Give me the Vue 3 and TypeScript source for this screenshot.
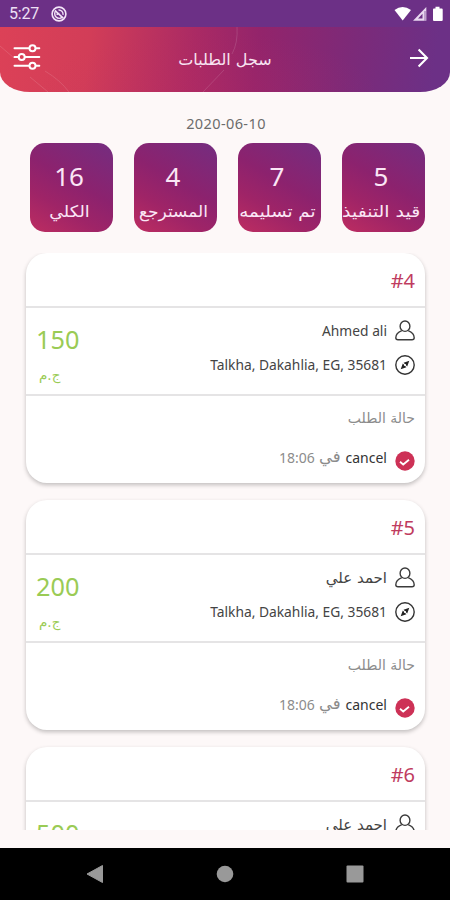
<script setup lang="ts">
interface Stat { value: number; label: string; kind: string }
interface Order { id: number; name: string; arabic: boolean; price: number; address?: string; currency?: string; status?: string; time?: string }

const stats: Stat[] = [
  { value: 5, label: 'قيد التنفيذ', kind: 'pending' },
  { value: 7, label: 'تم تسليمه', kind: 'delivered' },
  { value: 4, label: 'المسترجع', kind: 'returned' },
  { value: 16, label: 'الكلي', kind: 'total' },
]

const address = 'Talkha, Dakahlia, EG, 35681'
const currency = 'ج.م'
const orders: Order[] = [
  { id: 4, name: 'Ahmed ali', arabic: false, price: 150, address, currency, status: 'cancel', time: '18:06' },
  { id: 5, name: 'احمد علي', arabic: true, price: 200, address, currency, status: 'cancel', time: '18:06' },
  { id: 6, name: 'احمد علي', arabic: true, price: 500 },
]
</script>

<template>
  <div class="screen">
    <div class="status">
      <span class="clock">5:27</span>
      <svg class="dnd" width="16" height="16" viewBox="0 0 16 16" fill="none" stroke="#f3e4f8">
        <circle cx="8" cy="8" r="6.9" stroke-width="1.6" />
        <path d="M5 4.6 A4.4 4.4 0 1 0 11.5 11 M7.5 4 A4.2 4.2 0 0 1 12 8.8" stroke-width="1.4" />
        <path d="M4 4.5 L12.2 12.2 M5.5 8.5 L8.5 7.5" stroke-width="1.7" />
      </svg>
      <span class="grow"></span>
      <svg width="50" height="16" viewBox="0 0 50 16">
        <path d="M0.5 4 Q8.5 -2 17 4 L8.7 14.5 Z" fill="#fff" />
        <path d="M19 14.7 L32.3 1 V14.7 Z" fill="#e9d9f1" />
        <path d="M24 12.6 L28.5 7.8 V12.6 Z" fill="#6d3187" />
        <path d="M31 5 V14.7" stroke="#6d3187" stroke-width="0.7" />
        <path d="M39.5 2.5 H41.5 V0.7 H45.5 V2.5 H47.7 Q48.7 2.5 48.7 3.5 V14 Q48.7 15 47.7 15 H40 Q39 15 39 14 V3.5 Z" fill="#fff" />
      </svg>
    </div>

    <header class="header">
      <svg class="header-lines" width="450" height="65" viewBox="0 0 450 65" fill="none" stroke="#fff" stroke-opacity="0.13">
        <path d="M0 19 L14 31 M30 50 L48 65 M45 44 Q60 53 69 65" />
        <path d="M237 0 Q238 16 232 27 M224 43 L203 65" />
      </svg>
      <svg class="filter" width="28" height="28" viewBox="0 0 28 28" fill="none" stroke="#fff" stroke-width="2" stroke-linecap="round">
        <path d="M1.5 5.2 H16 M23 5.2 H26.3 M1.5 14 H5.5 M12 14 H26.3 M1.5 22.8 H16 M23 22.8 H26.3" />
        <circle cx="19.5" cy="5.2" r="3" />
        <circle cx="8.7" cy="14" r="3" />
        <circle cx="19.5" cy="22.8" r="3" />
      </svg>
      <h1 class="title" dir="rtl">سجل الطلبات</h1>
      <svg class="next" width="20" height="20" viewBox="0 0 20 20" fill="none" stroke="#fff" stroke-width="2.1">
        <path d="M1 10 H18 M9.6 1.6 L18 10 L9.6 18.4" />
      </svg>
    </header>

    <div class="date">2020-06-10</div>

    <section class="stats" dir="rtl">
      <div v-for="s in stats" :key="s.kind" class="tile" :class="s.kind">
        <span class="tile-value">{{ s.value }}</span>
        <span class="tile-label">{{ s.label }}</span>
      </div>
    </section>

    <main class="list" dir="rtl">
      <article v-for="o in orders" :key="o.id" class="card">
        <div class="card-head" dir="ltr">#{{ o.id }}</div>
        <div class="card-body">
          <div class="info">
            <div class="row">
              <svg width="20" height="21" viewBox="0 0 20 21" fill="none" stroke="#3b3b3b" stroke-width="1.4" stroke-linejoin="round">
                <ellipse cx="10" cy="6.2" rx="4.9" ry="5.2" />
                <path d="M6.8 10.7 C3.5 12 0.8 14.5 0.8 17.8 Q0.8 19.7 3 19.7 H17 Q19.2 19.7 19.2 17.8 C19.2 14.5 16.5 12 13.2 10.7" />
              </svg>
              <span class="name" :class="{ arabic: o.arabic }">{{ o.name }}</span>
            </div>
            <div v-if="o.address" class="row">
              <svg width="20" height="20" viewBox="0 0 20 20">
                <circle cx="10" cy="10" r="9.2" fill="none" stroke="#333" stroke-width="1.4" />
                <path d="M14.3 5.7 L12.2 11.4 L8.6 7.8 Z M5.7 14.3 L7.8 8.6 L11.4 12.2 Z" fill="#222" />
                <circle cx="10" cy="10" r="1.1" fill="#fff" />
              </svg>
              <span class="address" dir="ltr">{{ o.address }}</span>
            </div>
          </div>
          <div class="price">
            <span class="amount">{{ o.price }}</span>
            <span v-if="o.currency" class="currency">{{ o.currency }}</span>
          </div>
        </div>
        <div v-if="o.status" class="card-foot">
          <div class="foot-title">حالة الطلب</div>
          <div class="state">
            <svg class="check" width="20" height="20" viewBox="0 0 20 20">
              <circle cx="10" cy="10" r="9.7" fill="#cd3156" />
              <path d="M5 10.8 L8.2 13.5 L14 8.8" fill="none" stroke="#fff" stroke-width="1.8" />
            </svg>
            <span class="cancel">{{ o.status }}</span>
            <span class="at">في</span>
            <span class="time">{{ o.time }}</span>
          </div>
        </div>
      </article>
    </main>

    <nav class="nav">
      <svg width="18" height="20" viewBox="0 0 18 20"><path d="M1 10 L16.5 1.5 V18.5 Z" fill="#999" stroke="#999" /></svg>
      <svg width="18" height="20" viewBox="0 0 18 20"><circle cx="9" cy="10" r="8.3" fill="#999" /></svg>
      <svg width="18" height="20" viewBox="0 0 18 20"><rect x="0.5" y="1.5" width="17" height="17" rx="1" fill="#999" /></svg>
    </nav>
  </div>
</template>

<style>
body { margin: 0; background: #fdf8f8; }
</style>

<style scoped>
.screen {
  width: 450px; height: 900px; overflow: hidden;
  display: flex; flex-direction: column;
  background: #fdf8f8;
  font-family: "Noto Sans", "DejaVu Sans", sans-serif;
}
.status {
  height: 27px; flex: none; box-sizing: border-box;
  display: flex; align-items: center; padding: 0 6px 0 9px;
  background: #6c3086;
}
.clock { font: 400 16px/28px Roboto, sans-serif; color: #eee0f5; letter-spacing: -0.2px; width: 42px; padding-top: 1px; }
.grow { flex: 1; }
.header {
  height: 64.5px; flex: none; box-sizing: border-box; position: relative;
  display: flex; align-items: center; justify-content: space-between;
  padding: 0 21px 0 13px; overflow: hidden;
  border-radius: 0 0 30px 30px / 0 0 20px 20px;
  background: radial-gradient(ellipse 175px 68px at 205px 72px, rgba(200,45,95,.2), rgba(200,45,95,0)), linear-gradient(97deg, #dc4157 0%, #d23d58 20%, #aa2a64 43%, #93246b 57%, #7c2a79 78%, #6c3086 96%);
}
.header-lines { position: absolute; left: 0; top: 0; }
.filter { position: relative; margin-bottom: 4px; }
.next { position: relative; margin-bottom: 3px; }
.title { margin: 2px 0 0; position: relative; font: 400 16px/30px "DejaVu Sans", sans-serif; color: #f8e4f2; white-space: nowrap; }
.date { height: 51.5px; flex: none; line-height: 62px; text-align: center; padding-left: 2px; font-size: 14.5px; letter-spacing: .4px; color: #6c6c6c; }
.stats { display: flex; justify-content: space-between; flex: none; padding: 0 25px 0 30px; height: 110px; box-sizing: border-box; }
.tile {
  width: 83px; height: 89px; border-radius: 15px;
  display: flex; flex-direction: column; align-items: center;
  background: linear-gradient(30deg, #bd2d61 0%, #9f2467 30%, #8c226e 55%, #742d80 100%);
  color: #fbe6f6; overflow: hidden;
}
.tile-value { font-size: 26px; line-height: 34px; margin: 16px 5px 0 0; }
.tile-label { font: 400 16px/26px "DejaVu Sans", sans-serif; white-space: nowrap; margin: 6px 4px 0 0; }
.pending .tile-label { transform: scaleX(1.18); }
.delivered .tile-label { transform: scaleX(1.14); }
.returned .tile-label { transform: scaleX(1.06); }
.total .tile-label { transform: scaleX(1.1); }
.list { height: 577px; flex: none; overflow: hidden; padding: 0 25px 0 26px; box-sizing: border-box; }
.card {
  height: 230px; margin-bottom: 17px; border-radius: 21px; background: #fff;
  box-shadow: 0 2px 4px rgba(0,0,0,.24); overflow: hidden;
}
.card-head { height: 55px; box-sizing: border-box; border-bottom: 2px solid #e5e4e5; padding-right: 10px; text-align: right; font-size: 20px; line-height: 56px; color: #bf3c60; }
.card-body { height: 88px; box-sizing: border-box; border-bottom: 2px solid #e5e4e5; display: flex; justify-content: space-between; padding: 12px 10px 0 10px; }
.info { display: flex; flex-direction: column; gap: 13px; }
.row { display: flex; align-items: center; gap: 8px; height: 21px; color: #444; }
.name, .address { font-size: 13.8px; line-height: 20px; white-space: nowrap; }
.name.arabic { font-family: "DejaVu Sans", sans-serif; font-size: 15px; }
.price { direction: ltr; display: flex; flex-direction: column; color: #9acb55; }
.amount { font-size: 25.3px; line-height: 34px; margin-top: 2px; }
.currency { font: 400 13.5px/20px "DejaVu Sans", sans-serif; margin: 9px 0 0 3px; direction: rtl; align-self: flex-start; }
.card-foot { padding: 11px 10px 0; color: #8c8c8c; }
.foot-title { font: 400 14px/22px "DejaVu Sans", sans-serif; }
.state { display: flex; align-items: center; height: 24px; margin-top: 16px; font-size: 14px; }
.check { margin-top: 7px; }
.cancel { color: #333; margin-right: 8px; }
.at { font: 400 16.5px/20px "DejaVu Sans", sans-serif; margin: 0 5px 0 4px; }
.nav { height: 52px; margin-top: auto; flex: none; background: #000; display: flex; justify-content: space-between; align-items: center; padding: 0 86px; }
</style>
